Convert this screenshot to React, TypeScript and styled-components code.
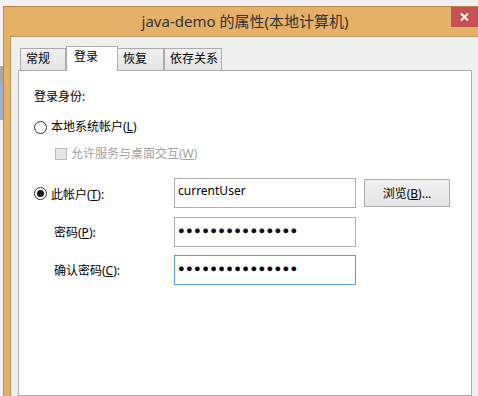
import React from 'react';
import styled, { createGlobalStyle } from 'styled-components';

const GlobalStyle = createGlobalStyle`
  html, body {
    margin: 0;
    padding: 0;
    width: 478px;
    height: 396px;
    overflow: hidden;
    background: #f1f1f3;
  }
  * {
    box-sizing: border-box;
  }
`;

const Desktop = styled.div`
  display: flex;
  width: 478px;
  height: 396px;
  overflow: hidden;
  background: #f1f1f3;
  font-family: "Noto Sans", "Noto Sans CJK SC", sans-serif;
`;

const BehindWindow = styled.div`
  flex: none;
  width: 3px;
  display: flex;
  flex-direction: column;
  padding-top: 66px;
`;

const BehindStripe = styled.div<{ $h: number; $color: string }>`
  height: ${p => p.$h}px;
  background: ${p => p.$color};
`;

const Window = styled.div`
  flex: none;
  width: 475px;
  margin-top: 6px;
  display: flex;
  flex-direction: column;
  background: #e5b169;
  border-top: 1px solid #b58a4e;
  border-left: 1px solid #b58a4e;
`;

const TitleBar = styled.div`
  height: 29px;
  display: flex;
  align-items: flex-start;
`;

const Title = styled.div`
  flex: 1;
  padding-left: 35px;
  text-align: center;
  font-size: 15px;
  line-height: 29px;
  color: #333;
  white-space: nowrap;
`;

const CloseButton = styled.div`
  width: 27px;
  height: 20px;
  background: #c75050;
  display: flex;
  align-items: center;
  justify-content: center;
`;

const Body = styled.div`
  flex: 1;
  margin-left: 6px;
  border-top: 1px solid #c0955a;
  border-left: 1px solid #c0955a;
  background: #f0f0f0;
  padding: 9px 0 0 7px;
  display: flex;
  flex-direction: column;
`;

const TabRow = styled.div`
  display: flex;
  align-items: flex-end;
  padding-left: 2px;
  height: 24px;
  position: relative;
  z-index: 1;
`;

const Tab = styled.div<{ $w: number; $active?: boolean; $noLeft?: boolean }>`
  width: ${p => p.$w}px;
  height: ${p => (p.$active ? 25 : 22)}px;
  margin-bottom: ${p => (p.$active ? -1 : 0)}px;
  border: 1px solid #acacac;
  border-bottom: none;
  border-left: ${p => (p.$noLeft ? 'none' : '1px solid #acacac')};
  background: ${p => (p.$active ? '#fff' : 'linear-gradient(#f0f0f0, #e5e5e5)')};
  font-size: 12px;
  line-height: 20px;
  padding-left: ${p => (p.$active ? 7 : 5)}px;
  color: #000;
  white-space: nowrap;
`;

const Panel = styled.div`
  flex: 1;
  width: 454px;
  border: 1px solid #acacac;
  background: #fff;
  padding: 18px 0 0 15px;
  display: flex;
  flex-direction: column;
  font-size: 12px;
  color: #000;
`;

const SectionLabel = styled.div`
  line-height: 16px;
  height: 16px;
`;

const OptionRow = styled.div<{ $top: number; $indent?: number }>`
  display: flex;
  align-items: center;
  gap: 4px;
  height: 16px;
  margin-top: ${p => p.$top}px;
  margin-left: ${p => p.$indent || 0}px;
`;

const Radio = styled.span<{ $checked?: boolean }>`
  flex: none;
  width: 13px;
  height: 13px;
  border-radius: 50%;
  border: 1px solid #333;
  background: #fff;
  display: flex;
  align-items: center;
  justify-content: center;
  &::after {
    content: '';
    display: ${p => (p.$checked ? 'block' : 'none')};
    width: 7px;
    height: 7px;
    border-radius: 50%;
    background: #1a1a1a;
  }
`;

const CheckBox = styled.span`
  flex: none;
  width: 12px;
  height: 12px;
  border: 1px solid #bcbcbc;
  background: #e6e6e6;
`;

const OptionText = styled.span<{ $disabled?: boolean }>`
  line-height: 16px;
  color: ${p => (p.$disabled ? '#a3a3a3' : '#000')};
  white-space: nowrap;
`;

const AccountGrid = styled.div`
  display: grid;
  grid-template-columns: 132px 182px 86px;
  grid-template-rows: 31px 30px 30px;
  column-gap: 8px;
  row-gap: 8px;
  margin-top: 16px;
`;

const FieldLabel = styled.div<{ $indent?: number }>`
  display: flex;
  align-items: center;
  gap: 4px;
  padding-left: ${p => p.$indent || 0}px;
  white-space: nowrap;
`;

const TextBox = styled.div<{ $focused?: boolean }>`
  height: 30px;
  border: 1px solid ${p => (p.$focused ? '#569de5' : '#abadb3')};
  background: #fff;
  padding: 4px 0 0 3px;
  line-height: 16px;
  font-size: 12px;
  white-space: nowrap;
  overflow: hidden;
`;

const Dots = styled.span`
  font-family: "Liberation Sans", sans-serif;
  font-size: 11px;
  letter-spacing: 1.4px;
  line-height: 16px;
`;

const Button = styled.div`
  height: 28px;
  margin-top: 1px;
  border: 1px solid #acacac;
  background: linear-gradient(#f0f0f0, #e5e5e5);
  display: flex;
  align-items: center;
  justify-content: center;
  font-size: 12px;
  white-space: nowrap;
`;

const PASSWORD = '●'.repeat(15);

export default function App() {
  return (
    <>
      <GlobalStyle />
      <Desktop>
        <BehindWindow>
          <BehindStripe $h={17} $color="#a9a9a9" />
          <BehindStripe $h={37} $color="#9cb1cf" />
        </BehindWindow>
        <Window>
          <TitleBar>
            <Title>java-demo 的属性(本地计算机)</Title>
            <CloseButton>
              <svg width="9" height="8" viewBox="0 0 9 8">
                <path d="M1 0.5 L8 7.5 M8 0.5 L1 7.5" stroke="#fff" strokeWidth="2" />
              </svg>
            </CloseButton>
          </TitleBar>
          <Body>
            <TabRow>
              <Tab $w={46}>常规</Tab>
              <Tab $w={52} $active>登录</Tab>
              <Tab $w={46} $noLeft>恢复</Tab>
              <Tab $w={58}>依存关系</Tab>
            </TabRow>
            <Panel>
              <SectionLabel>登录身份:</SectionLabel>
              <OptionRow $top={14}>
                <Radio />
                <OptionText>本地系统帐户(<u>L</u>)</OptionText>
              </OptionRow>
              <OptionRow $top={11} $indent={21}>
                <CheckBox />
                <OptionText $disabled>允许服务与桌面交互(<u>W</u>)</OptionText>
              </OptionRow>
              <AccountGrid>
                <FieldLabel>
                  <Radio $checked />
                  <span>此帐户(<u>T</u>):</span>
                </FieldLabel>
                <TextBox>currentUser</TextBox>
                <Button>浏览(<u>B</u>)...</Button>
                <FieldLabel $indent={20}>
                  <span>密码(<u>P</u>):</span>
                </FieldLabel>
                <TextBox><Dots>{PASSWORD}</Dots></TextBox>
                <div />
                <FieldLabel $indent={20}>
                  <span>确认密码(<u>C</u>):</span>
                </FieldLabel>
                <TextBox $focused><Dots>{PASSWORD}</Dots></TextBox>
                <div />
              </AccountGrid>
            </Panel>
          </Body>
        </Window>
      </Desktop>
    </>
  );
}
